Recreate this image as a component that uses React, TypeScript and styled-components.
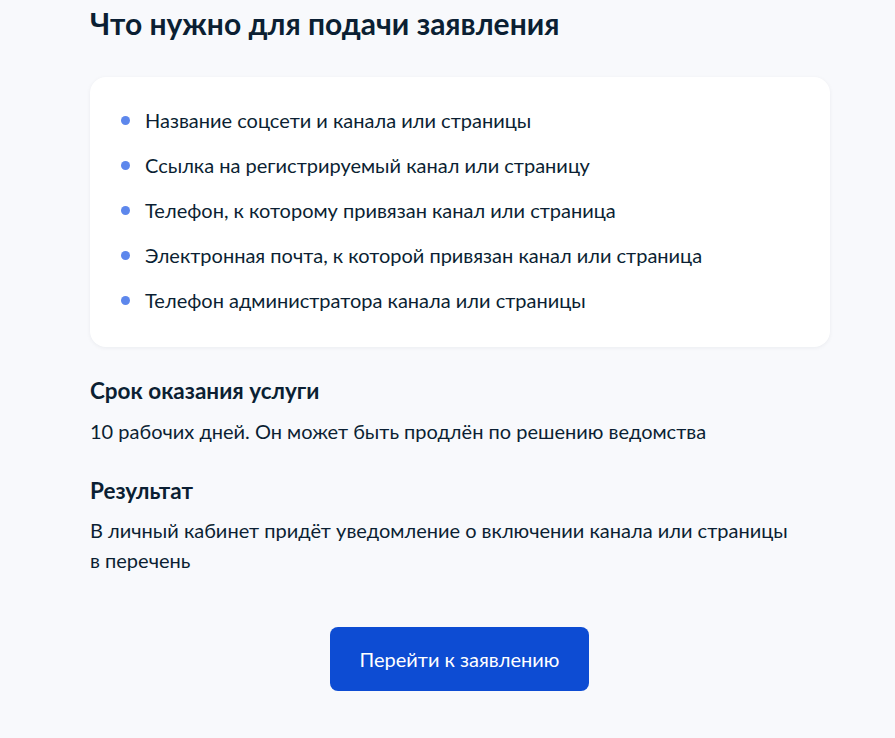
import React from "react";
import styled, { createGlobalStyle } from "styled-components";

const GlobalStyle = createGlobalStyle`
	html, body {
		margin: 0;
		padding: 0;
		background: #f8f9fc;
	}
	body {
		font-family: Lato, "Noto Sans", sans-serif;
		color: #0b1f33;
	}
`;

const Page = styled.div`
	width: 740px;
	padding: 5px 0 40px 90px;
`;

const Title = styled.h1`
	margin: 0 0 36px;
	font-size: 30px;
	line-height: 36px;
	font-weight: 700;
	color: #0b1f33;
`;

const Card = styled.div`
	background: #ffffff;
	border-radius: 16px;
	box-shadow: 0 1px 4px rgba(11, 31, 51, 0.06);
	padding: 31px 32px 35px 55px;
`;

const List = styled.ul`
	list-style: none;
	margin: 0;
	padding: 0;
	display: flex;
	flex-direction: column;
	gap: 21px;
`;

const Item = styled.li`
	position: relative;
	font-size: 20px;
	line-height: 24px;
	color: #0b1f33;

	&::before {
		content: "";
		position: absolute;
		left: -24px;
		top: 8px;
		width: 9px;
		height: 9px;
		border-radius: 50%;
		background: #5d87ec;
	}
`;

const Section = styled.section<{ $top: number }>`
	margin-top: ${(p) => p.$top}px;
`;

const SubTitle = styled.h2<{ $gap: number }>`
	margin: 0 0 ${(p) => p.$gap}px;
	font-size: 22.5px;
	line-height: 28px;
	font-weight: 700;
	color: #0b1f33;
`;

const Text = styled.p`
	margin: 0;
	max-width: 705px;
	font-size: 20px;
	line-height: 30px;
	color: #0b1f33;
`;

const Actions = styled.div`
	display: flex;
	justify-content: center;
	margin-top: 52px;
	width: 739px;
`;

const Button = styled.button`
	width: 259px;
	height: 64px;
	border: none;
	border-radius: 8px;
	background: #0d4cd3;
	color: #ffffff;
	font-family: Lato, "Noto Sans", sans-serif;
	font-size: 20px;
	cursor: pointer;

	&:hover {
		background: #0b43bd;
	}
`;

const items = [
	"Название соцсети и канала или страницы",
	"Ссылка на регистрируемый канал или страницу",
	"Телефон, к которому привязан канал или страница",
	"Электронная почта, к которой привязан канал или страница",
	"Телефон администратора канала или страницы",
];

const App: React.FC = (): React.ReactElement => {
	return (
		<>
			<GlobalStyle />
			<Page>
				<Title>Что нужно для подачи заявления</Title>
				<Card>
					<List>
						{items.map((item) => (
							<Item key={item}>{item}</Item>
						))}
					</List>
				</Card>
				<Section $top={30}>
					<SubTitle $gap={11}>Срок оказания услуги</SubTitle>
					<Text>10 рабочих дней. Он может быть продлён по решению ведомства</Text>
				</Section>
				<Section $top={31}>
					<SubTitle $gap={10}>Результат</SubTitle>
					<Text>
						В личный кабинет придёт уведомление о включении канала или страницы в перечень
					</Text>
				</Section>
				<Actions>
					<Button type="button">Перейти к заявлению</Button>
				</Actions>
			</Page>
		</>
	);
};

export default App;
